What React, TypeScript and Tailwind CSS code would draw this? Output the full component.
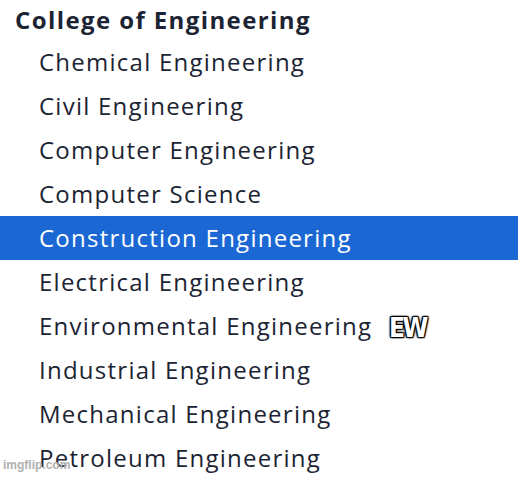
const programs = [
  "Chemical Engineering",
  "Civil Engineering",
  "Computer Engineering",
  "Computer Science",
  "Construction Engineering",
  "Electrical Engineering",
  "Environmental Engineering",
  "Industrial Engineering",
  "Mechanical Engineering",
  "Petroleum Engineering",
];

export default function App() {
  return (
    <div className="relative h-[481px] w-[518px] overflow-hidden bg-white font-['Open_Sans',sans-serif] text-[#1c2433]">
      <div className="flex h-10 items-center pl-[15px] text-[24px] font-bold tracking-[1.4px]">
        College of Engineering
      </div>
      <ul className="flex flex-col">
        {programs.map((name) => {
          const selected = name === "Construction Engineering";
          return (
            <li
              key={name}
              className={
                selected
                  ? "relative flex h-11 items-center bg-[#1b67d3] pb-[1px] pl-[39px] text-[24px] tracking-[1.25px] text-white"
                  : "relative flex h-11 items-center pb-[1px] pl-[39px] text-[24px] tracking-[1.25px]"
              }
            >
              {name}
              {name === "Environmental Engineering" ? (
                <span className="absolute left-[389px] top-[5px] font-['DejaVu_Sans_Condensed',sans-serif] text-[26px] font-bold tracking-[-2.5px] text-white [text-shadow:0_0_3px_#000,0_0_2px_#000,1px_1px_1px_#000,-1px_-1px_1px_#000,1px_-1px_1px_#000,-1px_1px_1px_#000]">
                  EW
                </span>
              ) : null}
            </li>
          );
        })}
      </ul>
      <span className="absolute bottom-[7px] left-[3px] font-['Liberation_Sans',sans-serif] text-[12px] font-bold text-[#b0b0b0]">
        imgflip.com
      </span>
    </div>
  );
}
